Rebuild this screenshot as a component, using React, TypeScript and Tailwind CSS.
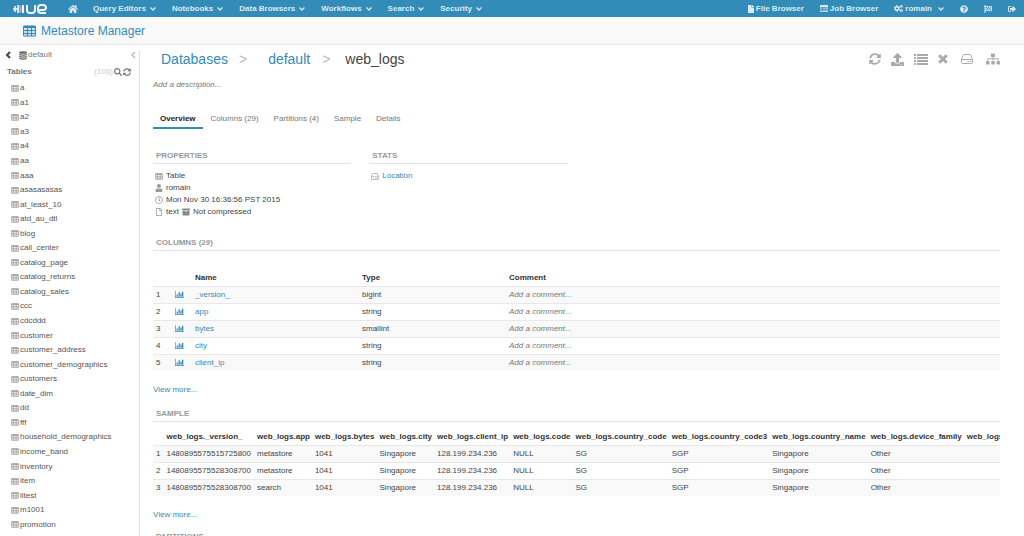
import type { ReactNode } from 'react'
import {
  FaArchive,
  FaCogs,
  FaFile,
  FaFlagCheckered,
  FaHome,
  FaQuestionCircle,
  FaRegClock,
  FaRegFile,
  FaSearch,
  FaSignOutAlt,
  FaSitemap,
  FaSyncAlt,
  FaUpload,
  FaUser,
} from 'react-icons/fa'

const MENUS = ['Query Editors', 'Notebooks', 'Data Browsers', 'Workflows', 'Search', 'Security']

const TABLES = [
  'a', 'a1', 'a2', 'a3', 'a4', 'aa', 'aaa', 'asasasasas', 'at_least_10', 'atd_au_dtl', 'blog',
  'call_center', 'catalog_page', 'catalog_returns', 'catalog_sales', 'ccc', 'cdcddd', 'customer',
  'customer_address', 'customer_demographics', 'customers', 'date_dim', 'dd', 'fff',
  'household_demographics', 'income_band', 'inventory', 'item', 'litest', 'm1001', 'promotion',
]

const TABS = ['Overview', 'Columns (29)', 'Partitions (4)', 'Sample', 'Details']

const COLUMNS = [
  { name: '_version_', type: 'bigint' },
  { name: 'app', type: 'string' },
  { name: 'bytes', type: 'smallint' },
  { name: 'city', type: 'string' },
  { name: 'client_ip', type: 'string' },
]

const SAMPLE_HEADERS = [
  '_version_', 'app', 'bytes', 'city', 'client_ip', 'code', 'country_code', 'country_code3',
  'country_name', 'device_family', 'extension',
]

const SAMPLE_ROWS = [
  ['1480895575515725800', 'metastore', '1041', 'Singapore', '128.199.234.236', 'NULL', 'SG', 'SGP', 'Singapore', 'Other', ''],
  ['1480895575528308700', 'metastore', '1041', 'Singapore', '128.199.234.236', 'NULL', 'SG', 'SGP', 'Singapore', 'Other', ''],
  ['1480895575528308700', 'search', '1041', 'Singapore', '128.199.234.236', 'NULL', 'SG', 'SGP', 'Singapore', 'Other', ''],
]

function TableIcon({ className }: { className?: string }) {
  return (
    <svg viewBox="0 0 26 24" className={className} fill="currentColor" aria-hidden="true">
      <rect y="1" width="26" height="22" rx="3" fillOpacity="0.2" />
      <path
        fillRule="evenodd"
        d="M3 1h20a3 3 0 0 1 3 3v16a3 3 0 0 1-3 3H3a3 3 0 0 1-3-3V4a3 3 0 0 1 3-3zM2 6v4h6V6zm8 0v4h6V6zm8 0v4h6V6zM2 12v4h6v-4zm8 0v4h6v-4zm8 0v4h6v-4zM2 18v3h6v-3zm8 0v3h6v-3zm8 0v3h6v-3z"
      />
    </svg>
  )
}

function DatabaseIcon({ className }: { className?: string }) {
  return (
    <svg viewBox="0 0 24 26" className={className} fill="currentColor" aria-hidden="true">
      <ellipse cx="12" cy="4" rx="12" ry="4" />
      <path d="M0 7q4 3 12 3t12-3v3q-3 4-12 4T0 10zM0 13q4 3 12 3t12-3v3q-3 4-12 4T0 16zM0 19q4 3 12 3t12-3v3q-3 4-12 4T0 22z" />
    </svg>
  )
}

function DriveIcon({ className }: { className?: string }) {
  return (
    <svg viewBox="0 0 24 20" className={className} fill="none" stroke="currentColor" strokeWidth="2" aria-hidden="true">
      <path d="M1 11 4 3q.6-2 2.500-2h11q1.900 0 2.500 2l3 8v6q0 2-2 2H3q-2 0-2-2zM1 11h22" />
      <path d="M13 15h3M18 15h3" />
    </svg>
  )
}

function ListIcon({ className }: { className?: string }) {
  return (
    <svg viewBox="0 0 28 22" className={className} fill="currentColor" aria-hidden="true">
      <path d="M0 0h4v4H0zM6 0h22v4H6zM0 6h4v4H0zM6 6h22v4H6zM0 12h4v4H0zM6 12h22v4H6zM0 18h4v4H0zM6 18h22v4H6z" />
    </svg>
  )
}

function ListAltIcon({ className }: { className?: string }) {
  return (
    <svg viewBox="0 0 28 24" className={className} fill="currentColor" aria-hidden="true">
      <path fillRule="evenodd" d="M3 0h22q3 0 3 3v18q0 3-3 3H3q-3 0-3-3V3q0-3 3-3zM2 7v14q0 1 1 1h22q1 0 1-1V7z" />
      <path d="M4 9h3v2H4zM9 9h15v2H9zM4 13h3v2H4zM9 13h15v2H9zM4 17h3v2H4zM9 17h15v2H9z" />
    </svg>
  )
}

function TimesIcon({ className }: { className?: string }) {
  return (
    <svg viewBox="0 0 20 20" className={className} fill="none" stroke="currentColor" strokeWidth="6" strokeLinejoin="round" aria-hidden="true">
      <path d="m2.500 2.500 15 15M17.500 2.500l-15 15" />
    </svg>
  )
}

function ChartIcon({ className }: { className?: string }) {
  return (
    <svg viewBox="0 0 28 22" className={className} fill="currentColor" aria-hidden="true">
      <path d="M0 0h2v20h26v2H0zM5 11h4v7H5zM11 4h4v14h-4zM17 8h4v10h-4zM22 2h4v16h-4z" />
    </svg>
  )
}

function AngleDown({ className }: { className?: string }) {
  return (
    <svg viewBox="0 0 12 8" className={className} fill="none" stroke="currentColor" strokeWidth="2.500" aria-hidden="true">
      <path d="m1 1 5 5 5-5" />
    </svg>
  )
}

function AngleLeft({ className, weight = 3 }: { className?: string; weight?: number }) {
  return (
    <svg viewBox="0 0 12 16" className={className} fill="none" stroke="currentColor" strokeWidth={weight} aria-hidden="true">
      <path d="m10 2-6 6 6 6" />
    </svg>
  )
}

function HueLogo() {
  return (
    <a href="#" aria-label="Hue" className="flex w-[34px] items-center">
      <svg viewBox="0 0 34 10" className="h-[10px] w-[34px]" fill="none" stroke="#f0f6fa" strokeWidth="2" aria-hidden="true">
        <path d="M2 2v6M5 1v8M0 5h6" strokeWidth="1.600" />
        <path d="M6.500 1.500q2.500 3.500 0 7" stroke="#b9a9dc" />
        <path d="M10 1v8" />
        <path d="M14 1v5q0 3 3 3h2q3 0 3-3V1" />
        <path d="M33 9h-5q-3 0-3-3V4q0-3 3-3h2q3 0 3 2.500T30 6h-5" />
      </svg>
    </a>
  )
}

function SectionTitle({ children }: { children: ReactNode }) {
  return (
    <h2 className="flex h-4 items-center border-b border-[#e3e3e3] pl-[3px] font-bold text-[#999] uppercase">
      {children}
    </h2>
  )
}

function NavBar() {
  return (
    <nav className="flex h-[17px] shrink-0 items-center bg-[#338bb8] pr-2 pl-[13px] font-bold text-[#dbebf4]">
      <HueLogo />
      <a href="#" aria-label="Home" className="ml-[21px]">
        <FaHome className="size-[10px]" />
      </a>
      <div className="ml-[15px] flex gap-4">
        {MENUS.map((menu) => (
          <button key={menu} type="button" className="flex items-center gap-1">
            {menu}
            <AngleDown className="h-1 w-[6px]" />
          </button>
        ))}
      </div>
      <div className="ml-auto flex items-center gap-4">
        <a href="#" className="flex items-center gap-px">
          <FaFile className="size-2" />
          File Browser
        </a>
        <a href="#" className="flex items-center gap-0.5">
          <ListAltIcon className="h-[7px] w-2" />
          Job Browser
        </a>
        <button type="button" className="flex items-center gap-0.5">
          <FaCogs className="size-[9px]" />
          romain
          <AngleDown className="ml-1 h-1 w-[6px]" />
        </button>
        <a href="#" aria-label="Help">
          <FaQuestionCircle className="size-2" />
        </a>
        <a href="#" aria-label="Tour">
          <FaFlagCheckered className="size-2" />
        </a>
        <a href="#" aria-label="Sign out">
          <FaSignOutAlt className="size-2" />
        </a>
      </div>
    </nav>
  )
}

function Sidebar() {
  return (
    <aside className="mt-[5px] flex w-[140px] shrink-0 flex-col border-r border-[#e5e5e5]">
      <div className="flex h-[10px] items-center pr-[3px] pl-[5px]">
        <button type="button" aria-label="Back">
          <AngleLeft className="h-2 w-[6px]" weight={4} />
        </button>
        <DatabaseIcon className="ml-2 h-[9px] w-2 text-[#666]" />
        <a href="#" className="ml-px text-[#777]">
          default
        </a>
        <button type="button" aria-label="Hide panel" className="ml-auto text-[#bbb]">
          <AngleLeft className="h-2 w-[6px]" />
        </button>
      </div>
      <div className="mt-[7px] flex h-[10px] items-center pr-2 pl-[7px] text-[#777]">
        <h2 className="font-bold">Tables</h2>
        <span className="ml-auto text-[#ccc]">(106)</span>
        <button type="button" aria-label="Search tables" className="ml-px">
          <FaSearch className="size-2" />
        </button>
        <button type="button" aria-label="Refresh tables" className="ml-px">
          <FaSyncAlt className="size-2" />
        </button>
      </div>
      <ul className="mt-1 mb-1 grid flex-1 auto-rows-fr pl-[11px] text-[#555]">
        {TABLES.map((table) => (
          <li key={table} className="flex items-center">
            <a href="#" className="flex items-center gap-px">
              <TableIcon className="h-[7px] w-2 text-[#999]" />
              {table}
            </a>
          </li>
        ))}
      </ul>
    </aside>
  )
}

function Header() {
  return (
    <header className="flex h-5 items-center pl-2">
      <nav className="flex items-center text-[14px]">
        <a href="#" className="text-[#338bb8]">
          Databases
        </a>
        <span className="ml-[11px] text-[#bbb]">&gt;</span>
        <a href="#" className="ml-[21px] text-[#338bb8]">
          default
        </a>
        <span className="ml-3 text-[#bbb]">&gt;</span>
        <span className="ml-[15px] text-[#444]">web_logs</span>
      </nav>
      <div className="ml-auto flex items-center gap-[10px] text-[#aaa]">
        <button type="button" aria-label="Refresh">
          <FaSyncAlt className="size-3" />
        </button>
        <button type="button" aria-label="Import data">
          <FaUpload className="size-[13px]" />
        </button>
        <button type="button" aria-label="Browse data">
          <ListIcon className="h-[11px] w-[14px]" />
        </button>
        <button type="button" aria-label="Drop table">
          <TimesIcon className="size-[10px]" />
        </button>
        <button type="button" aria-label="View file location" className="ml-[3px]">
          <DriveIcon className="h-[10px] w-3" />
        </button>
        <button type="button" aria-label="Lineage" className="ml-[3px]">
          <FaSitemap className="size-[14px]" />
        </button>
      </div>
    </header>
  )
}

function Properties() {
  return (
    <div className="mt-[19px] grid grid-cols-4 gap-[18px]">
      <section>
        <SectionTitle>Properties</SectionTitle>
        <ul className="mt-[6px] pl-0.5 leading-3">
          <li className="flex items-center gap-[3px]">
            <TableIcon className="h-[7px] w-2 text-[#999]" />
            Table
          </li>
          <li className="flex items-center gap-[3px]">
            <FaUser className="size-2 text-[#999]" />
            romain
          </li>
          <li className="flex items-center gap-[3px]">
            <FaRegClock className="size-2 text-[#999]" />
            Mon Nov 30 16:36:56 PST 2015
          </li>
          <li className="flex items-center gap-[3px]">
            <FaRegFile className="size-2 text-[#999]" />
            text
            <FaArchive className="size-2 text-[#888]" />
            Not compressed
          </li>
        </ul>
      </section>
      <section>
        <SectionTitle>Stats</SectionTitle>
        <a href="#" className="mt-[6px] flex items-center gap-[3px] pl-0.5 leading-3 text-[#338bb8]">
          <DriveIcon className="h-[7px] w-2 text-[#999]" />
          Location
        </a>
      </section>
    </div>
  )
}

function ColumnsTable() {
  return (
    <table className="mt-[17px] w-full table-fixed text-left">
      <thead>
        <tr className="h-[18px] text-[#333]">
          <th className="w-[19px]" />
          <th className="w-[20px]" />
          <th className="w-[167px] pt-0.5 pl-[3px]">Name</th>
          <th className="w-[147px] pt-0.5 pl-[3px]">Type</th>
          <th className="pt-0.5 pl-[3px]">Comment</th>
        </tr>
      </thead>
      <tbody>
        {COLUMNS.map((column, i) => (
          <tr key={column.name} className="h-[17px] border-t border-[#e8e8e8] odd:bg-[#f9f9f9]">
            <td className="pl-[3px]">{i + 1}</td>
            <td className="pl-[3px]">
              <ChartIcon className="h-[7px] w-[9px] text-[#338bb8]" />
            </td>
            <td className="pl-[3px]">
              <a href="#" className="text-[#338bb8]">
                {column.name}
              </a>
            </td>
            <td className="pl-[3px]">{column.type}</td>
            <td className="pl-[3px] text-[#777] italic">Add a comment...</td>
          </tr>
        ))}
      </tbody>
    </table>
  )
}

function SampleTable() {
  return (
    <div className="mt-[6px] overflow-hidden">
      <table className="text-left whitespace-nowrap">
        <thead>
          <tr className="h-[17px] text-[#333]">
            <th />
            {SAMPLE_HEADERS.map((header, i) => (
              <th key={header} className={i === 0 ? 'px-[3px] pt-0.5' : 'pt-0.5 pr-0.5 pl-[3px]'}>
                web_logs.{header}
              </th>
            ))}
          </tr>
        </thead>
        <tbody>
          {SAMPLE_ROWS.map((row, i) => (
            <tr key={i} className="h-[17px] border-t border-[#e8e8e8] odd:bg-[#f9f9f9]">
              <td className="px-[3px]">{i + 1}</td>
              {row.map((cell, j) => (
                <td key={j} className={j === 0 ? 'px-[3px]' : 'pr-0.5 pl-[3px]'}>
                  {cell}
                </td>
              ))}
            </tr>
          ))}
        </tbody>
      </table>
    </div>
  )
}

export default function App() {
  return (
    <div className="flex h-screen flex-col overflow-hidden bg-white font-['Liberation_Sans',Arial,sans-serif] text-[8px] leading-[10px] text-[#444]">
      <NavBar />
      <div className="flex h-7 shrink-0 items-center gap-[5px] border-b border-[#e5e5e5] bg-[#f9f9f9] pl-[23px] text-[#338bb8]">
        <TableIcon className="h-3 w-[13px]" />
        <h1 className="text-[12px]">Metastore Manager</h1>
      </div>
      <div className="flex min-h-0 flex-1">
        <Sidebar />
        <main className="min-w-0 flex-1 overflow-hidden pt-1 pr-6 pl-[13px]">
          <Header />
          <p className="mt-[10px] leading-3 text-[#777] italic">Add a description...</p>
          <div role="tablist" className="mt-5 flex gap-px">
            {TABS.map((tab, i) => (
              <button
                key={tab}
                type="button"
                role="tab"
                aria-selected={i === 0}
                className={`h-[18px] border-b-2 px-[7px] ${i === 0 ? 'border-[#338bb8] font-bold text-[#222]' : 'border-transparent text-[#777]'}`}
              >
                {tab}
              </button>
            ))}
          </div>
          <Properties />
          <section className="mt-[17px]">
            <SectionTitle>Columns (29)</SectionTitle>
            <ColumnsTable />
            <a href="#" className="mt-[13px] block leading-3 text-[#338bb8]">
              View more...
            </a>
          </section>
          <section className="mt-[10px]">
            <SectionTitle>Sample</SectionTitle>
            <SampleTable />
            <a href="#" className="mt-[13px] block leading-3 text-[#338bb8]">
              View more...
            </a>
          </section>
          <section className="mt-2">
            <SectionTitle>Partitions</SectionTitle>
          </section>
        </main>
      </div>
    </div>
  )
}
